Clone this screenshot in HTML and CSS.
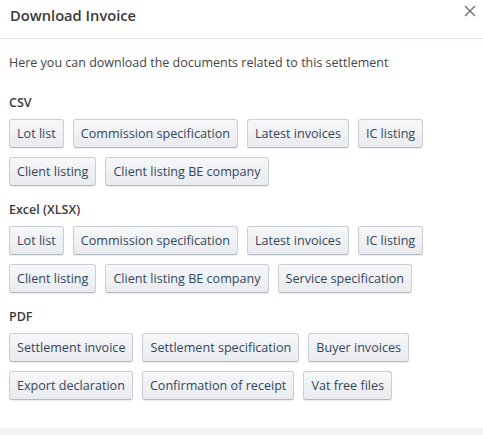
FILE: index.html
```html
<!DOCTYPE html>
<html lang="en">
<head>
<meta charset="utf-8">
<title>Download Invoice</title>
<link rel="stylesheet" href="styles.css">
</head>
<body>
<div class="modal">
  <div class="modal-header">
    <h1 class="modal-title">Download Invoice</h1>
    <button class="close" aria-label="Close">
      <svg width="12" height="12" viewBox="0 0 12 12"><path d="M1 1 L11 11 M11 1 L1 11" stroke="#7a7a7a" stroke-width="1.5" fill="none"/></svg>
    </button>
  </div>
  <div class="modal-body">
    <p class="intro">Here you can download the documents related to this settlement</p>
    <section class="group">
      <h2 class="group-title">CSV</h2>
      <div class="buttons">
        <button class="btn">Lot list</button>
        <button class="btn">Commission specification</button>
        <button class="btn">Latest invoices</button>
        <button class="btn">IC listing</button>
        <button class="btn">Client listing</button>
        <button class="btn">Client listing BE company</button>
      </div>
    </section>
    <section class="group">
      <h2 class="group-title">Excel (XLSX)</h2>
      <div class="buttons">
        <button class="btn">Lot list</button>
        <button class="btn">Commission specification</button>
        <button class="btn">Latest invoices</button>
        <button class="btn">IC listing</button>
        <button class="btn">Client listing</button>
        <button class="btn">Client listing BE company</button>
        <button class="btn">Service specification</button>
      </div>
    </section>
    <section class="group">
      <h2 class="group-title">PDF</h2>
      <div class="buttons">
        <button class="btn">Settlement invoice</button>
        <button class="btn">Settlement specification</button>
        <button class="btn">Buyer invoices</button>
        <button class="btn">Export declaration</button>
        <button class="btn">Confirmation of receipt</button>
        <button class="btn">Vat free files</button>
      </div>
    </section>
  </div>
  <div class="modal-footer"></div>
</div>
</body>
</html>
```

FILE: styles.css
```css
* { box-sizing: border-box; }
html, body {
  margin: 0;
  padding: 0;
  background: #ffffff;
}
body {
  font-family: "Open Sans", "Noto Sans", "Liberation Sans", sans-serif;
  color: #444;
}
.modal {
  width: 483px;
  height: 435px;
  display: flex;
  flex-direction: column;
}
.modal-header {
  height: 39px;
  border-bottom: 1px solid #dfe3e9;
  display: flex;
  align-items: flex-start;
  justify-content: space-between;
  padding: 0 6px 0 10px;
}
.modal-title {
  margin: 0;
  font-size: 14.7px;
  font-weight: 600;
  color: #3a3a3a;
  line-height: 30px;
}
.close {
  border: 0;
  background: none;
  padding: 0;
  margin-top: 4px;
  width: 14px;
  height: 14px;
  display: flex;
  align-items: center;
  justify-content: center;
}
.modal-body {
  flex: 1;
  padding: 15px 9px 0 9px;
}
.intro {
  margin: 0;
  font-size: 12.5px;
  line-height: 18px;
  color: #444;
}
.group { margin-top: 22px; }
.group + .group { margin-top: 15px; }
.group-title {
  margin: 0;
  font-size: 12.5px;
  font-weight: 600;
  line-height: 18px;
  color: #3a3a3a;
}
.buttons {
  margin-top: 7px;
  display: flex;
  flex-wrap: wrap;
  gap: 9px 9px;
}
.btn {
  height: 29px;
  padding: 0 7px;
  font-family: inherit;
  font-size: 12.6px;
  color: #34465c;
  background: linear-gradient(#f6f7f9, #e9ebef);
  border: 1px solid #c9ced6;
  border-bottom-color: #b3b9c3;
  border-radius: 3px;
  box-shadow: 0 1px 1px rgba(0,0,0,0.08);
}
.modal-footer {
  height: 7px;
  background: #f4f4f4;
}
```
